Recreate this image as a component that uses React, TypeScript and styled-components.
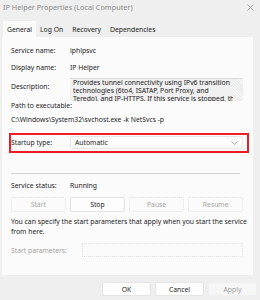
import styled, { createGlobalStyle } from 'styled-components';

const GlobalStyle = createGlobalStyle`
  html, body {
    margin: 0;
    padding: 0;
    background: #f0f0f0;
  }
  * {
    box-sizing: border-box;
  }
`;

const Window = styled.div`
  display: flex;
  flex-direction: column;
  width: 260px;
  height: 300px;
  background: #efefef;
  font-family: 'Noto Sans', 'Open Sans', sans-serif;
  font-size: 6.8px;
  color: #1b1b1b;
  overflow: hidden;
`;

const TitleBar = styled.div`
  display: flex;
  align-items: center;
  justify-content: space-between;
  height: 14px;
  padding: 0 6px 0 3px;
  font-size: 7.3px;
  color: #8a8a8a;
`;

const Close = styled.span`
  display: flex;
  align-items: center;
`;

const TabRow = styled.div`
  display: flex;
  align-items: flex-end;
  height: 23px;
  padding-left: 3px;
`;

const Tab = styled.div<{ $active?: boolean }>`
  display: flex;
  align-items: center;
  height: 16px;
  padding: 0 ${({ $active }) => ($active ? '4px' : '3px')};
  margin-right: ${({ $active }) => ($active ? '1px' : '3px')};
  background: ${({ $active }) => ($active ? '#fbfbfb' : 'transparent')};
  white-space: nowrap;
`;

const Panel = styled.div`
  display: flex;
  flex-direction: column;
  margin: 0 7px 0 2px;
  padding: 9px 10px 18px 9px;
  background: #fbfbfb;
`;

const Row = styled.div<{ $top?: number }>`
  display: flex;
  align-items: center;
  margin-top: ${({ $top = 0 }) => $top}px;
  line-height: 10px;
  white-space: nowrap;
`;

const Label = styled.div<{ $muted?: boolean }>`
  width: 59px;
  flex-shrink: 0;
  color: ${({ $muted }) => ($muted ? '#a3a3a3' : '#1b1b1b')};
`;

const Text = styled.div<{ $top?: number }>`
  margin-top: ${({ $top = 0 }) => $top}px;
  line-height: 10px;
  white-space: nowrap;
`;

const DescRow = styled.div`
  display: flex;
  align-items: flex-start;
  margin-top: 5px;
`;

const DescLabel = styled(Label)`
  padding-top: 4px;
  line-height: 10px;
`;

const DescBox = styled.div`
  display: flex;
  flex: 1;
  height: 23px;
  background: #f0f0f0;
  border-top: 1px solid #dadada;
  overflow: hidden;
`;

const DescText = styled.div`
  flex: 1;
  min-width: 0;
  padding: 0 3px;
  line-height: 8.2px;
  white-space: nowrap;
  overflow: hidden;
`;

const ScrollTrack = styled.div`
  width: 10px;
  flex-shrink: 0;
  background: repeating-linear-gradient(45deg, #ebebeb 0 1px, #f5f5f5 1px 2px);
`;

const Highlight = styled.div`
  display: flex;
  align-items: center;
  margin: 8px -6px 0 -2px;
  padding: 1px 4px 2px 0;
  border: 2px solid #ee1c24;
`;

const Select = styled.div`
  display: flex;
  align-items: center;
  justify-content: space-between;
  flex: 1;
  height: 13px;
  padding: 0 4px;
  background: #fdfdfd;
  border: 1px solid #e6e6e6;
  border-radius: 2px;
`;

const Separator = styled.div`
  height: 1px;
  margin: 20px 3px 0 0;
  background: #d5d5d5;
`;

const ButtonGrid = styled.div`
  display: grid;
  grid-template-columns: repeat(4, 1fr);
  gap: 4.5px;
  margin-top: 6px;
`;

const ServiceButton = styled.div<{ $enabled?: boolean }>`
  display: flex;
  align-items: center;
  justify-content: center;
  height: 15px;
  background: ${({ $enabled }) => ($enabled ? '#fdfdfd' : '#fbfbfb')};
  border: 1px ${({ $enabled }) => ($enabled ? 'solid #e3e3e3' : 'dotted #e2e2e2')};
  border-radius: 2px;
  color: ${({ $enabled }) => ($enabled ? '#1b1b1b' : '#a3a3a3')};
`;

const ParamRow = styled.div`
  display: flex;
  align-items: center;
  margin-top: 6px;
`;

const ParamLabel = styled(Label)`
  width: 71px;
`;

const ParamInput = styled.div`
  flex: 1;
  height: 14px;
  border: 1px dotted #e0e0e0;
`;

const Footer = styled.div`
  display: flex;
  justify-content: flex-end;
  gap: 4px;
  padding: 7px 3px 0 0;
`;

const DialogButton = styled.div<{ $disabled?: boolean }>`
  display: flex;
  align-items: center;
  justify-content: center;
  width: 49px;
  height: 14px;
  background: ${({ $disabled }) => ($disabled ? '#f6f6f6' : '#fefefe')};
  border: 1px solid ${({ $disabled }) => ($disabled ? '#efefef' : '#e5e5e5')};
  border-radius: 2px;
  color: ${({ $disabled }) => ($disabled ? '#a0a0a0' : '#1b1b1b')};
`;

export default function App() {
  return (
    <>
      <GlobalStyle />
      <Window>
        <TitleBar>
          <span>IP Helper Properties (Local Computer)</span>
          <Close>
            <svg width="7" height="7" viewBox="0 0 7 7">
              <path d="M0.5 0.5L6.5 6.5M6.5 0.5L0.5 6.5" stroke="#9a9a9a" strokeWidth="0.8" />
            </svg>
          </Close>
        </TitleBar>
        <TabRow>
          <Tab $active>General</Tab>
          <Tab>Log On</Tab>
          <Tab>Recovery</Tab>
          <Tab>Dependencies</Tab>
        </TabRow>
        <Panel>
          <Row>
            <Label>Service name:</Label>
            <span>iphlpsvc</span>
          </Row>
          <Row $top={7}>
            <Label>Display name:</Label>
            <span>IP Helper</span>
          </Row>
          <DescRow>
            <DescLabel>Description:</DescLabel>
            <DescBox>
              <DescText>
                Provides tunnel connectivity using IPv6 transition
                <br />
                technologies (6to4, ISATAP, Port Proxy, and
                <br />
                Teredo), and IP-HTTPS. If this service is stopped, the
              </DescText>
              <ScrollTrack />
            </DescBox>
          </DescRow>
          <Text>Path to executable:</Text>
          <Text $top={4}>C:\Windows\System32\svchost.exe -k NetSvcs -p</Text>
          <Highlight>
            <Label>Startup type:</Label>
            <Select>
              <span>Automatic</span>
              <svg width="7" height="4" viewBox="0 0 7 4">
                <path d="M0.5 0.5L3.5 3.3L6.5 0.5" fill="none" stroke="#8a8a8a" strokeWidth="0.8" />
              </svg>
            </Select>
          </Highlight>
          <Separator />
          <Row $top={7}>
            <Label>Service status:</Label>
            <span>Running</span>
          </Row>
          <ButtonGrid>
            <ServiceButton>Start</ServiceButton>
            <ServiceButton $enabled>Stop</ServiceButton>
            <ServiceButton>Pause</ServiceButton>
            <ServiceButton>Resume</ServiceButton>
          </ButtonGrid>
          <Text $top={5}>
            You can specify the start parameters that apply when you start the service
            <br />
            from here.
          </Text>
          <ParamRow>
            <ParamLabel $muted>Start parameters:</ParamLabel>
            <ParamInput />
          </ParamRow>
        </Panel>
        <Footer>
          <DialogButton>OK</DialogButton>
          <DialogButton>Cancel</DialogButton>
          <DialogButton $disabled>Apply</DialogButton>
        </Footer>
      </Window>
    </>
  );
}
